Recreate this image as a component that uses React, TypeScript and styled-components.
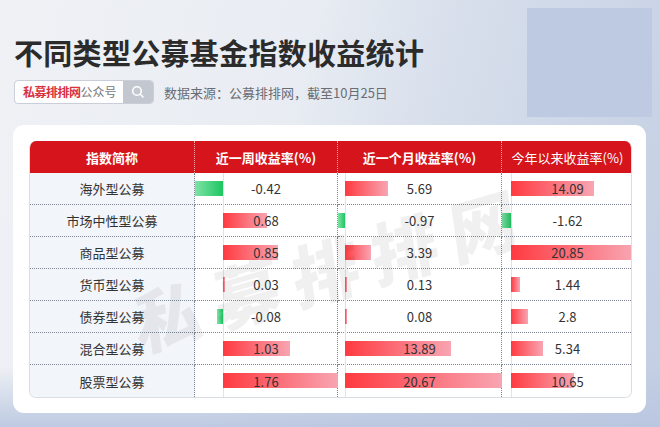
import React from 'react';
import styled, { createGlobalStyle } from 'styled-components';

const GlobalStyle = createGlobalStyle`
    html, body {
        margin: 0;
        padding: 0;
    }
    body {
        font-family: "Noto Sans CJK SC", "Noto Sans", sans-serif;
        color: #333;
    }
`;

type Row = { name: string; week: number; month: number; year: number };

const rows: Row[] = [
    { name: '海外型公募', week: -0.42, month: 5.69, year: 14.09 },
    { name: '市场中性型公募', week: 0.68, month: -0.97, year: -1.62 },
    { name: '商品型公募', week: 0.85, month: 3.39, year: 20.85 },
    { name: '货币型公募', week: 0.03, month: 0.13, year: 1.44 },
    { name: '债券型公募', week: -0.08, month: 0.08, year: 2.8 },
    { name: '混合型公募', week: 1.03, month: 13.89, year: 5.34 },
    { name: '股票型公募', week: 1.76, month: 20.67, year: 10.65 },
];

const columns: { key: 'week' | 'month' | 'year'; title: string; width: number }[] = [
    { key: 'week', title: '近一周收益率(%)', width: 143 },
    { key: 'month', title: '近一个月收益率(%)', width: 164 },
    { key: 'year', title: '今年以来收益率(%)', width: 131 },
];

const range = (key: 'week' | 'month' | 'year') => {
    const vals = rows.map((r) => r[key]);
    return { min: Math.min(0, ...vals), max: Math.max(0, ...vals) };
};

const SearchIcon = () => (
    <svg width="14" height="14" viewBox="0 0 14 14" fill="none">
        <circle cx="6" cy="6" r="4.3" stroke="#fff" strokeWidth="1.6" />
        <path d="M9.2 9.2 L12 12" stroke="#fff" strokeWidth="1.6" strokeLinecap="round" />
    </svg>
);

export default function App() {
    return (
        <Page>
            <GlobalStyle />
            <Corner />
            <Head>
                <Title>不同类型公募基金指数收益统计</Title>
                <SubRow>
                    <Search>
                        <SearchField>
                            <Brand>私募排排网</Brand>公众号
                        </SearchField>
                        <SearchButton>
                            <SearchIcon />
                        </SearchButton>
                    </Search>
                    <Source>数据来源：公募排排网，截至10月25日</Source>
                </SubRow>
            </Head>
            <Card>
                <Table>
                    <HeadCell $first>指数简称</HeadCell>
                    {columns.map((c, i) => (
                        <HeadCell key={c.key} $light={i === 2} $last={i === 2}>
                            {c.title}
                        </HeadCell>
                    ))}
                    {rows.map((r, ri) => (
                        <React.Fragment key={r.name}>
                            <NameCell $bottom={ri === rows.length - 1}>{r.name}</NameCell>
                            {columns.map((c, ci) => {
                                const { min, max } = range(c.key);
                                const span = max - min;
                                const zero = ((0 - min) / span) * c.width;
                                const v = r[c.key];
                                const w = (Math.abs(v) / span) * c.width;
                                const left = v >= 0 ? zero : zero - w;
                                return (
                                    <ValueCell key={c.key} $last={ci === 2} $bottom={ri === rows.length - 1}>
                                        <Axis style={{ left: zero }} />
                                        <Bar $neg={v < 0} style={{ left, width: Math.max(w, 1.5) }} />
                                        <Value>{String(v)}</Value>
                                    </ValueCell>
                                );
                            })}
                        </React.Fragment>
                    ))}
                </Table>
                <Watermark>私募排排网</Watermark>
            </Card>
        </Page>
    );
}

const Page = styled.div`
    position: relative;
    width: 660px;
    height: 427px;
    overflow: hidden;
    background:
        linear-gradient(180deg, rgba(185, 198, 224, 0) 0%, rgba(185, 198, 224, 0) 86%, rgba(185, 198, 224, 0.9) 100%),
        linear-gradient(105deg, #eff1f5 0%, #e9edf3 40%, #d6deeb 62%, #c2cee3 100%);
`;

const Corner = styled.div`
    position: absolute;
    left: 527px;
    top: 8px;
    width: 125px;
    height: 109px;
    background: #bdcae2;
`;

const Head = styled.header`
    position: relative;
    padding: 33px 0 0 14px;
`;

const Title = styled.h1`
    margin: 0;
    font-size: 29px;
    line-height: 38px;
    font-weight: 700;
    color: #2b2b2b;
    letter-spacing: 0.3px;
`;

const SubRow = styled.div`
    display: flex;
    align-items: center;
    gap: 10px;
    margin-top: 9px;
`;

const Search = styled.div`
    display: flex;
    height: 22px;
    border: 1px solid #c9ced8;
    border-radius: 4px;
    overflow: hidden;
    background: #fff;
`;

const SearchField = styled.div`
    width: 100px;
    padding-left: 8px;
    font-size: 12px;
    line-height: 22px;
    color: #777;
`;

const Brand = styled.span`
    color: #d8323f;
    font-weight: 700;
    letter-spacing: -0.5px;
`;

const SearchButton = styled.div`
    width: 30px;
    display: flex;
    align-items: center;
    justify-content: center;
    background: #c3c7cf;
`;

const Source = styled.div`
    font-size: 13px;
    color: #6a6d73;
`;

const Card = styled.section`
    position: absolute;
    left: 13px;
    top: 125px;
    width: 633px;
    height: 288px;
    box-sizing: border-box;
    padding: 16px 0 0 16px;
    background: #fff;
    border-radius: 11px;
`;

const Table = styled.div`
    position: relative;
    display: grid;
    grid-template-columns: 165px 143px 164px 131px;
    grid-auto-rows: 32px;
    width: 603px;
    border: 1px solid #d9dde4;
    border-top: none;
    border-radius: 7px;
    overflow: hidden;
    box-sizing: border-box;
`;

const HeadCell = styled.div<{ $first?: boolean; $light?: boolean; $last?: boolean }>`
    display: flex;
    align-items: center;
    justify-content: center;
    background: #d5141b;
    color: #fff;
    font-size: 13px;
    font-weight: ${(p) => (p.$light ? 400 : 700)};
    border-right: ${(p) => (p.$last ? 'none' : '1px dotted rgba(255, 220, 220, 0.75)')};
`;

const NameCell = styled.div<{ $bottom?: boolean }>`
    display: flex;
    align-items: center;
    justify-content: center;
    background: #f2f5fa;
    font-size: 13px;
    color: #333;
    border-right: 1px dotted #7d8596;
    border-bottom: ${(p) => (p.$bottom ? 'none' : '1px dotted #7d8596')};
`;

const ValueCell = styled.div<{ $last?: boolean; $bottom?: boolean }>`
    position: relative;
    display: flex;
    align-items: center;
    justify-content: center;
    background: #fff;
    border-right: ${(p) => (p.$last ? 'none' : '1px dotted #7d8596')};
    border-bottom: ${(p) => (p.$bottom ? 'none' : '1px dotted #7d8596')};
`;

const Axis = styled.div`
    position: absolute;
    top: 0;
    bottom: -1px;
    width: 1px;
    background: #dfe2e8;
`;

const Bar = styled.div<{ $neg: boolean }>`
    position: absolute;
    top: 8px;
    height: 15px;
    background: ${(p) =>
        p.$neg
            ? 'linear-gradient(90deg, #7fe3a6 0%, #1ec562 100%)'
            : 'linear-gradient(90deg, #ff3a40 0%, #f8a5b2 100%)'};
`;

const Value = styled.span`
    position: relative;
    font-size: 13px;
    color: #333;
`;

const Watermark = styled.div`
    position: absolute;
    left: 122px;
    top: 158px;
    font-size: 68px;
    line-height: 80px;
    font-weight: 900;
    letter-spacing: 14px;
    color: rgba(60, 60, 70, 0.08);
    transform: rotate(-16deg) skewX(-8deg);
    transform-origin: left center;
    white-space: nowrap;
    pointer-events: none;
`;
